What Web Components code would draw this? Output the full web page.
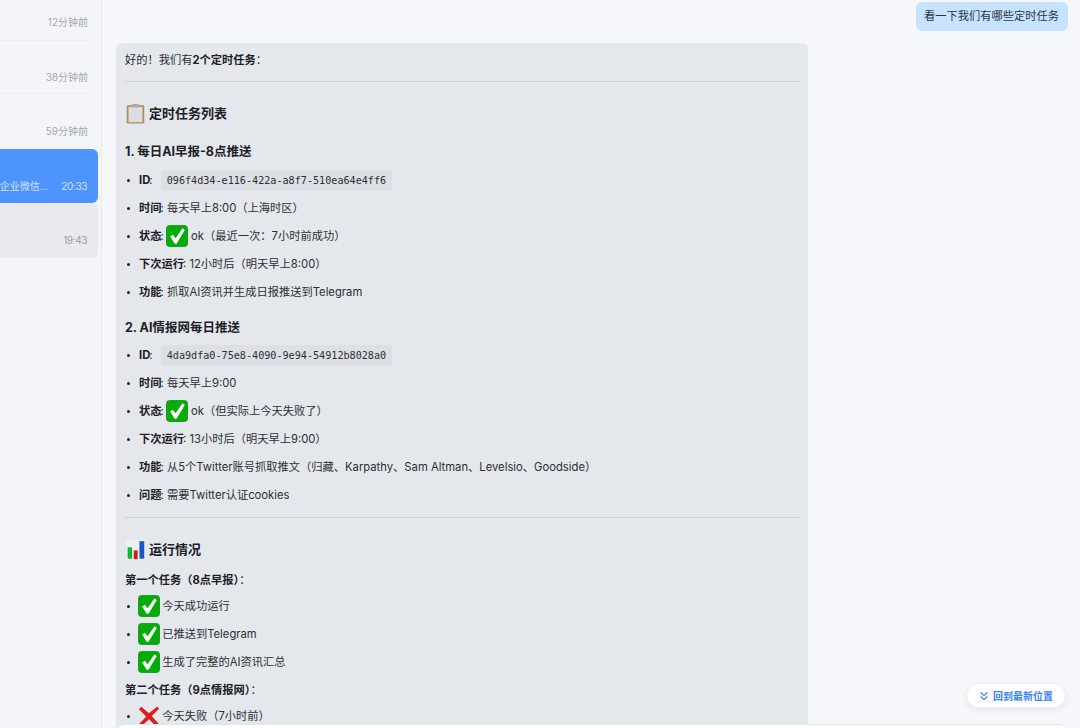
<!DOCTYPE html>
<html lang="zh">
<head>
<meta charset="utf-8">
<title>chat</title>
<style>
html, body { margin: 0; height: 100%; overflow: hidden; background: #f6f7fb; }
body { font-family: Inter, "Noto Sans CJK SC", sans-serif; font-size: 11.25px; color: #2b2f36; }
</style>
</head>
<body>
<chat-app>
	<side-bar slot="side">
		<side-item time="12分钟前" h="41" pb="12" line></side-item>
		<side-item time="38分钟前" h="53" pb="10" line></side-item>
		<side-item time="59分钟前" h="55" pb="11"></side-item>
		<side-item time="20:33" h="54" pb="10" preview="企业微信..." active></side-item>
		<side-item time="19:43" h="55" pb="11" grey></side-item>
	</side-bar>
	<chat-view slot="main">
		<user-msg>看一下我们有哪些定时任务</user-msg>
		<bot-msg>
			<p class="first">好的！我们有<b>2个定时任务</b>：</p>
			<hr class="a">
			<h2><emo-ji kind="clip" size="21"></emo-ji>定时任务列表</h2>
			<h3>1. 每日AI早报-8点推送</h3>
			<ul>
				<li><b>ID</b>: <code>096f4d34-e116-422a-a8f7-510ea64e4ff6</code></li>
				<li><b>时间</b>: 每天早上8:00（上海时区）</li>
				<li><b>状态</b>: <emo-ji kind="check"></emo-ji> ok（最近一次：7小时前成功）</li>
				<li><b>下次运行</b>: 12小时后（明天早上8:00）</li>
				<li><b>功能</b>: 抓取AI资讯并生成日报推送到Telegram</li>
			</ul>
			<h3>2. AI情报网每日推送</h3>
			<ul>
				<li><b>ID</b>: <code>4da9dfa0-75e8-4090-9e94-54912b8028a0</code></li>
				<li><b>时间</b>: 每天早上9:00</li>
				<li><b>状态</b>: <emo-ji kind="check"></emo-ji> ok（但实际上今天失败了）</li>
				<li><b>下次运行</b>: 13小时后（明天早上9:00）</li>
				<li><b>功能</b>: 从5个Twitter账号抓取推文（归藏、Karpathy、Sam Altman、Levelsio、Goodside）</li>
				<li><b>问题</b>: 需要Twitter认证cookies</li>
			</ul>
			<hr class="b">
			<h2><emo-ji kind="chart" size="21"></emo-ji>运行情况</h2>
			<p class="sub"><b>第一个任务（8点早报）</b>：</p>
			<ul>
				<li><emo-ji kind="check"></emo-ji> 今天成功运行</li>
				<li><emo-ji kind="check"></emo-ji> 已推送到Telegram</li>
				<li><emo-ji kind="check"></emo-ji> 生成了完整的AI资讯汇总</li>
			</ul>
			<p class="sub"><b>第二个任务（9点情报网）</b>：</p>
			<ul>
				<li><emo-ji kind="cross"></emo-ji> 今天失败（7小时前）</li>
			</ul>
		</bot-msg>
	</chat-view>
</chat-app>

<script>
class ChatApp extends HTMLElement {
	constructor() {
		super();
		this.attachShadow({ mode: "open" }).innerHTML = `
			<style>
				:host { display: flex; height: 728px; overflow: hidden; }
				.side { flex: 0 0 102px; min-width: 0; overflow: hidden; }
				.main { flex: 1; min-width: 0; position: relative; }
				.input {
					position: absolute; left: 14px; right: 12px; top: 724px; height: 40px;
					background: #fff; border: 1px solid #e3e5ea; border-radius: 8px; box-sizing: border-box;
				}
			</style>
			<div class="side"><slot name="side"></slot></div>
			<div class="main">
				<slot name="main"></slot>
				<jump-button>回到最新位置</jump-button>
				<div class="input"></div>
			</div>
		`;
	}
}

class SideBar extends HTMLElement {
	constructor() {
		super();
		this.attachShadow({ mode: "open" }).innerHTML = `
			<style>
				:host {
					display: flex; flex-direction: column; height: 728px; box-sizing: border-box;
					background: #f4f5f9; border-right: 1px solid #e7e9ee; padding-right: 3px;
				}
			</style>
			<slot></slot>
		`;
	}
}

class SideItem extends HTMLElement {
	connectedCallback() {
		if (this.shadowRoot) return;
		let time = this.getAttribute("time");
		let preview = this.getAttribute("preview") || "";
		let h = this.getAttribute("h");
		let pb = this.getAttribute("pb");
		this.attachShadow({ mode: "open" }).innerHTML = `
			<style>
				:host {
					display: flex; align-items: flex-end; justify-content: flex-end; gap: 13px;
					height: ${h}px; box-sizing: border-box; flex: none;
					padding: 0 10px ${pb}px 0; font-size: 10px; color: #a3a7af; line-height: 14px;
				}
				:host([line]) { box-shadow: inset 0 -1px 0 #eceef2; margin-right: 10px; padding-right: 0; }
				:host([active]) { background: #4e94ff; color: #cfe2ff; border-radius: 0 6px 6px 0; padding-right: 11px; }
				:host([grey]) { background: #e8eaee; border-radius: 0 6px 6px 0; color: #9a9ea6; padding-right: 11px; }
				:host([active]) .t, :host([grey]) .t { letter-spacing: -.4px; }
				.p { white-space: nowrap; }
			</style>
			${preview ? `<span class="p">${preview}</span>` : ""}<span class="t">${time}</span>
		`;
	}
}

class ChatView extends HTMLElement {
	constructor() {
		super();
		this.attachShadow({ mode: "open" }).innerHTML = `
			<style>
				:host {
					display: flex; flex-direction: column; align-items: flex-start; gap: 12px;
					height: 728px; overflow: hidden; box-sizing: border-box; padding: 2px 12px 0 14px;
				}
			</style>
			<slot></slot>
		`;
	}
}

class UserMsg extends HTMLElement {
	constructor() {
		super();
		this.attachShadow({ mode: "open" }).innerHTML = `
			<style>
				:host {
					display: block; align-self: flex-end; background: #c6e4ff; color: #2f343b;
					border-radius: 6px; padding: 0 9px 0 8px; line-height: 29px; height: 29px;
				}
			</style>
			<slot></slot>
		`;
	}
}

class BotMsg extends HTMLElement {
	constructor() {
		super();
		this.attachShadow({ mode: "open" }).innerHTML = `
			<style>
				:host {
					display: block; width: 692px; box-sizing: border-box; flex: none;
					background: #e4e7ec; border-radius: 6px; padding: 9px 8px 40px 9px; line-height: 17px;
				}
			</style>
			<slot></slot>
		`;
		// the message body is passed in by the user, rules have to live beside the slot
		let style = document.createElement("style");
		style.textContent = `
			bot-msg p { margin: 0; }
			bot-msg b { font-weight: 700; color: #1d2026; }
			bot-msg hr { border: 0; border-top: 1px solid #cfd2d7; margin: 0; }
			bot-msg hr.a { margin-top: 12px; }
			bot-msg hr.b { margin-top: 8px; }
			bot-msg h2 {
				display: flex; align-items: center; gap: 3px; margin: 19px 0 0; height: 24px;
				font-size: 13px; font-weight: 700; color: #1d2026;
			}
			bot-msg h3 { margin: 18px 0 0; height: 17px; font-size: 12.5px; font-weight: 700; color: #1d2026; line-height: 17px; }
			bot-msg ul + h3 { margin-top: 13px; }
			bot-msg ul { list-style: none; margin: 6px 0 0; padding: 0; }
			bot-msg h3 + ul { margin-top: 6px; }
			bot-msg ul + h3 + ul { margin-top: 5px; }
			bot-msg li { display: flex; align-items: center; height: 28px; white-space: pre-wrap; }
			bot-msg li b { margin-right: -1px; }
			bot-msg li emo-ji { margin: 0 -1px; }
			bot-msg li b ~ emo-ji { margin-right: 0; }
			bot-msg li::before { content: ""; flex: none; width: 3px; height: 3px; border-radius: 50%; background: #1d2026; margin: 0 9px 0 2px; }
			bot-msg code {
				font-family: "DejaVu Sans Mono", monospace; font-size: 10.15px; background: #dcdfe4;
				border-radius: 4px; padding: 0 6px; line-height: 21px; margin-left: 5px;
			}
			bot-msg p.sub { margin-top: 11px; }
			bot-msg p.sub + ul { margin-top: 3px; }
			bot-msg ul + p.sub { margin-top: 6px; }
		`;
		document.head.appendChild(style);
	}
}

class EmoJi extends HTMLElement {
	connectedCallback() {
		if (this.shadowRoot) return;
		let size = this.getAttribute("size") || 22;
		let shapes = {
			check: `<rect x=".5" y=".5" width="23" height="23" rx="3.5" fill="#07ad07" stroke="#058a05" stroke-width=".8"/>
				<path d="M4.5 12.5L7.5 10.5 10.5 14.5 18 3.5 20.5 5.5 11.5 20.5H9.5z" fill="#fff"/>`,
			cross: `<path d="M3.5 2L12 9 21 1.5 23 4 15 12 23.5 21.5 20 23.5 12 15.5 3.5 23.5 1 21 9 12.5 1 4.5z" fill="#d8201c"/>`,
			clip: `<rect x="2" y="2.5" width="20" height="21" rx="1.5" fill="#b08a5a"/>
				<rect x="4" y="4.5" width="16" height="17.5" fill="#dcdcdc"/>
				<rect x="8" y="1" width="8" height="4" rx="1" fill="#a9a9a9"/>`,
			chart: `<rect x="1.5" y="1" width="21" height="23" fill="#eef1f4"/>
				<rect x="3" y="9.5" width="5" height="13" fill="#12b52c"/>
				<rect x="10" y="13" width="4.5" height="10" fill="#cf1d1d"/>
				<rect x="16.5" y="2.5" width="5.5" height="20" fill="#1858c4"/>`
		};
		this.attachShadow({ mode: "open" }).innerHTML = `
			<style>:host { display: inline-flex; flex: none; vertical-align: middle; }</style>
			<svg width="${size}" height="${size}" viewBox="0 0 24 24">${shapes[this.getAttribute("kind")]}</svg>
		`;
	}
}

class JumpButton extends HTMLElement {
	constructor() {
		super();
		this.attachShadow({ mode: "open" }).innerHTML = `
			<style>
				:host {
					position: absolute; right: 14px; top: 683px; height: 25px; width: 100px; box-sizing: border-box;
					display: flex; align-items: center; justify-content: center; gap: 4px;
					background: #fff; border: 1px solid #eceef2; border-radius: 13px;
					box-shadow: 0 2px 6px rgba(30, 40, 70, .08);
					color: #3b82f6; font-size: 10px; font-weight: 600;
				}
			</style>
			<svg width="10" height="10" viewBox="0 0 10 10" fill="none" stroke="#3b82f6" stroke-width="1.2">
				<path d="M1.5 1.5L5 4.5 8.5 1.5M1.5 5.5L5 8.5 8.5 5.5"/>
			</svg>
			<slot></slot>
		`;
	}
}

customElements.define("chat-app", ChatApp);
customElements.define("side-bar", SideBar);
customElements.define("side-item", SideItem);
customElements.define("chat-view", ChatView);
customElements.define("user-msg", UserMsg);
customElements.define("bot-msg", BotMsg);
customElements.define("emo-ji", EmoJi);
customElements.define("jump-button", JumpButton);
</script>
</body>
</html>
